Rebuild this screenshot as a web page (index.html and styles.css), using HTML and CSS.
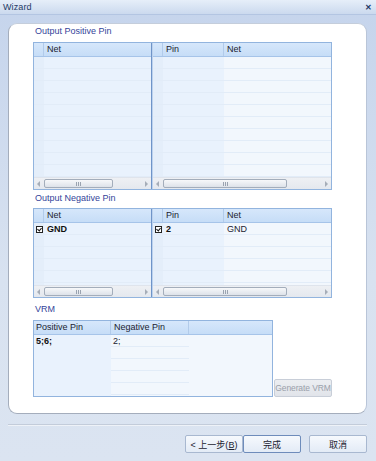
FILE: index.html
```html
<!DOCTYPE html>
<html lang="en">

<head>
    <meta charset="UTF-8">
    <meta name="viewport" content="width=device-width, initial-scale=1.0">
    <title>Wizard</title>
    <link rel="stylesheet" href="styles.css">
</head>

<body>
    <div class="titlebar">
        <span class="title">Wizard</span>
        <span class="close">&#x2715;</span>
    </div>

    <div class="frame">
        <div class="panel">
            <div class="section-title">Output Positive Pin</div>
            <div class="split split-pos">
                <div class="grid grid-left">
                    <div class="grid-head">
                        <div class="hcell ind"></div>
                        <div class="hcell fill">Net</div>
                    </div>
                    <div class="grid-body">
                        <div class="col ind"></div>
                        <div class="col fill"></div>
                    </div>
                    <div class="hscroll">
                        <span class="arrow left"></span>
                        <span class="track"><span class="thumb thumb-left"><i></i></span></span>
                        <span class="arrow right"></span>
                    </div>
                </div>
                <div class="grid grid-right">
                    <div class="grid-head">
                        <div class="hcell ind"></div>
                        <div class="hcell pin">Pin</div>
                        <div class="hcell fill">Net</div>
                    </div>
                    <div class="grid-body">
                        <div class="col ind"></div>
                        <div class="col pin"></div>
                        <div class="col fill light"></div>
                    </div>
                    <div class="hscroll">
                        <span class="arrow left"></span>
                        <span class="track"><span class="thumb thumb-right"><i></i></span></span>
                        <span class="arrow right"></span>
                    </div>
                </div>
            </div>

            <div class="section-title gap">Output Negative Pin</div>
            <div class="split split-neg">
                <div class="grid grid-left">
                    <div class="grid-head">
                        <div class="hcell ind"></div>
                        <div class="hcell fill">Net</div>
                    </div>
                    <div class="grid-body">
                        <div class="col ind">
                            <div class="cell"><span class="check"></span></div>
                        </div>
                        <div class="col fill">
                            <div class="cell bold">GND</div>
                        </div>
                    </div>
                    <div class="hscroll">
                        <span class="arrow left"></span>
                        <span class="track"><span class="thumb thumb-left"><i></i></span></span>
                        <span class="arrow right"></span>
                    </div>
                </div>
                <div class="grid grid-right">
                    <div class="grid-head">
                        <div class="hcell ind"></div>
                        <div class="hcell pin">Pin</div>
                        <div class="hcell fill">Net</div>
                    </div>
                    <div class="grid-body">
                        <div class="col ind">
                            <div class="cell"><span class="check"></span></div>
                        </div>
                        <div class="col pin">
                            <div class="cell bold">2</div>
                        </div>
                        <div class="col fill light">
                            <div class="cell">GND</div>
                        </div>
                    </div>
                    <div class="hscroll">
                        <span class="arrow left"></span>
                        <span class="track"><span class="thumb thumb-right"><i></i></span></span>
                        <span class="arrow right"></span>
                    </div>
                </div>
            </div>

            <div class="section-title gap-vrm">VRM</div>
            <div class="vrm-row">
                <div class="grid vrm">
                    <div class="grid-head">
                        <div class="hcell vpos">Positive Pin</div>
                        <div class="hcell vneg">Negative Pin</div>
                        <div class="hcell fill"></div>
                    </div>
                    <div class="grid-body">
                        <div class="col vpos plain">
                            <div class="cell bold">5;6;</div>
                        </div>
                        <div class="col vneg light">
                            <div class="cell">2;</div>
                        </div>
                        <div class="col fill light plain"></div>
                    </div>
                </div>
                <button class="btn btn-disabled" disabled>Generate VRM</button>
            </div>
        </div>

        <div class="separator"></div>

        <div class="footer">
            <button class="btn btn-nav">&lt; 上一步(<u>B</u>)</button>
            <button class="btn btn-nav btn-default">完成</button>
            <button class="btn btn-nav btn-cancel">取消</button>
        </div>
    </div>
</body>

</html>
```

FILE: styles.css
```css
body {
    margin: 0;
    padding: 0;
    width: 376px;
    height: 461px;
    overflow: hidden;
    font-family: "Liberation Sans", "Noto Sans CJK SC", sans-serif;
    font-size: 9px;
    color: #1b2230;
    background: linear-gradient(#c5d4ec, #d8e2f0 60%, #dbe4f1);
}

.titlebar {
    height: 14px;
    display: flex;
    align-items: center;
    justify-content: space-between;
    padding: 0 4px 0 3px;
    background: linear-gradient(#e6eef9, #cbd9ee);
    border-bottom: 1px solid #b3c5e2;
}

.title {
    color: #1e3a66;
    font-size: 9px;
    letter-spacing: 0.1px;
}

.close {
    color: #1e3a66;
    font-size: 8px;
    font-weight: bold;
}

.frame {
    padding: 8px 9px 0 8px;
}

.panel {
    height: 391px;
    box-sizing: border-box;
    background-color: #fff;
    border: 1px solid #a4adbc;
    border-top-color: #c4cddb;
    border-right-color: #b9c5d8;
    border-radius: 9px;
    padding: 1px 34px 0 24px;
}

.section-title {
    height: 12px;
    line-height: 12px;
    padding-left: 2px;
    margin-bottom: 5px;
    color: #34449a;
}

.section-title.gap {
    margin-top: 2px;
    margin-bottom: 4px;
}

.section-title.gap-vrm {
    margin-top: 5px;
    margin-bottom: 5px;
}

/* two grids side by side */
.split {
    display: flex;
    border: 1px solid #92b4de;
}

.split-pos {
    height: 148px;
    box-sizing: border-box;
}

.split-neg {
    height: 90px;
    box-sizing: border-box;
}

.grid {
    display: flex;
    flex-direction: column;
    overflow: hidden;
}

.grid-left {
    width: 117px;
    border-right: 1px solid #6f94c8;
}

.grid-right {
    flex: 1;
    border-left: 1px solid #bcd2ee;
}

.grid-head {
    display: flex;
    height: 13px;
    flex-shrink: 0;
    background: linear-gradient(#d6e7fb, #c6ddf7);
    border-bottom: 1px solid #a6c4e9;
}

.hcell {
    line-height: 13px;
    padding-left: 3px;
    box-sizing: border-box;
    border-right: 1px solid #b2cbea;
    white-space: nowrap;
}

.hcell.ind {
    width: 10px;
    padding: 0;
}

.hcell.fill {
    flex: 1;
    border-right: none;
}

.hcell.pin,
.col.pin {
    width: 61px;
}

.grid-body {
    flex: 1;
    display: flex;
}

.col {
    box-sizing: border-box;
    background-color: #e9f2fd;
    background-image: repeating-linear-gradient(to bottom, transparent 0 11px, #e2ecf8 11px 12px);
}

.col.ind {
    width: 10px;
    background-color: #e4eefa;
}

.col.fill {
    flex: 1;
}

.col.light {
    background-color: #f2f7fd;
}

.col.plain {
    background-image: none;
}

.cell {
    height: 12px;
    line-height: 12px;
    padding-left: 3px;
    white-space: nowrap;
}

.col.ind .cell {
    padding-left: 2px;
    display: flex;
    align-items: center;
}

.bold {
    font-weight: bold;
    color: #111;
}

.check {
    width: 5px;
    height: 5px;
    border: 1px solid #222;
    background: #fff;
    position: relative;
}

.check::after {
    content: "";
    position: absolute;
    left: 1px;
    top: 0;
    width: 2px;
    height: 3px;
    border-right: 1px solid #111;
    border-bottom: 1px solid #111;
    transform: rotate(40deg);
}

/* horizontal scrollbar */
.hscroll {
    height: 11px;
    flex-shrink: 0;
    display: flex;
    align-items: center;
    background: linear-gradient(#eef0f4, #e4e8ee);
    border-top: 1px solid #dfe4ec;
}

.arrow {
    width: 10px;
    height: 11px;
    position: relative;
}

.arrow::after {
    content: "";
    position: absolute;
    top: 3px;
    border-top: 3px solid transparent;
    border-bottom: 3px solid transparent;
}

.arrow.left::after {
    left: 3px;
    border-right: 3px solid #a6adb8;
}

.arrow.right::after {
    left: 4px;
    border-left: 3px solid #a6adb8;
}

.track {
    flex: 1;
    height: 9px;
}

.thumb {
    display: flex;
    justify-content: center;
    align-items: center;
    height: 9px;
    box-sizing: border-box;
    border: 1px solid #a3adbb;
    border-radius: 2px;
    background: linear-gradient(#f7f8fa, #dde2e9);
}

.thumb-left {
    width: 69px;
}

.thumb-right {
    width: 124px;
}

.thumb i {
    width: 5px;
    height: 4px;
    background: repeating-linear-gradient(to right, #9aa3b0 0 1px, transparent 1px 2px);
}

/* VRM */
.vrm-row {
    display: flex;
    align-items: flex-end;
    gap: 1px;
}

.vrm {
    width: 240px;
    height: 77px;
    box-sizing: border-box;
    border: 1px solid #92b4de;
}

.hcell.vpos,
.col.vpos {
    width: 77px;
}

.hcell.vneg,
.col.vneg {
    width: 78px;
}

.col.vpos .cell,
.col.vneg .cell {
    padding-left: 2px;
}

.hcell.vpos {
    padding-left: 2px;
}

.btn {
    font-family: "Liberation Sans", "Noto Sans CJK SC", sans-serif;
    font-size: 9px;
    padding: 0;
    margin: 0;
    box-sizing: border-box;
    border-radius: 2px;
    white-space: nowrap;
}

.btn-disabled {
    width: 58px;
    height: 18px;
    font-size: 8.5px;
    letter-spacing: -0.1px;
    color: #9aa0aa;
    background: linear-gradient(#eceef2, #e1e4ea);
    border: 1px solid #c8ced8;
}

.separator {
    height: 1px;
    margin: 10px 0 0 0;
    background-color: #c3ccda;
    border-bottom: 1px solid #eef2f8;
}

.footer {
    display: flex;
    justify-content: flex-end;
    padding-top: 9px;
}

.btn-nav {
    width: 58px;
    height: 18px;
    color: #1b2230;
    background: linear-gradient(#f6f9fd, #e3ebf6);
    border: 1px solid #a8b8d0;
}

.btn-nav u {
    text-decoration: underline;
}

.btn-default {
    border-color: #6e8cbb;
}

.btn-cancel {
    margin-left: 8px;
}
```
